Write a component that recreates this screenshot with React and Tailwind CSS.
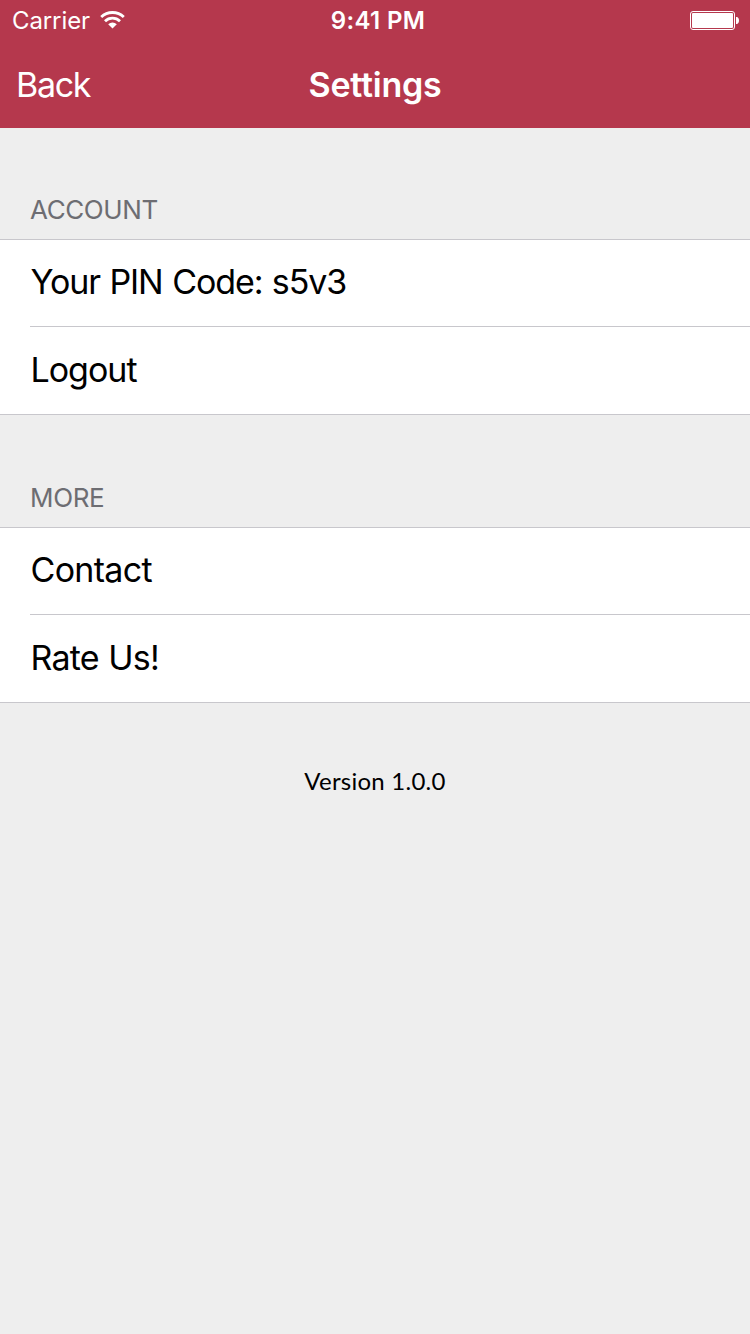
const rowText = "pb-[2px] pl-[0.5px] font-['Inter',sans-serif] text-[34px] leading-[40px] text-black whitespace-nowrap";

function WifiIcon() {
  return (
    <svg className="block h-[18px] w-[25px]" viewBox="0 0 25 18" fill="none">
      <path d="M1.2 6.1A16.2 16.2 0 0 1 23.8 6.1" stroke="white" strokeWidth="2.8" />
      <path d="M5 10.2A10.8 10.8 0 0 1 20 10.2" stroke="white" strokeWidth="2.8" />
      <path d="M8.2 13.3A6.3 6.3 0 0 1 16.8 13.3L12.5 17.6Z" fill="white" />
    </svg>
  );
}

function BatteryIcon() {
  return (
    <svg className="block h-[19px] w-[49px]" viewBox="0 0 49 19" fill="none">
      <rect x="0.5" y="0.5" width="44" height="18" rx="2.5" stroke="white" />
      <rect x="2" y="2" width="41" height="15" rx="1" fill="white" />
      <path d="M46 6H47C48.3 6.3 49 7.6 49 9.5S48.3 12.7 47 13H46Z" fill="white" />
    </svg>
  );
}

function Section({ title, rows, headingClass }) {
  return (
    <section>
      <h2 className={`${headingClass} pl-[30px] font-['Inter',sans-serif] text-[26px] leading-[32px] text-[#6d6d72]`}>{title}</h2>
      <ul className="border-y border-[#c8c7cc] bg-white">
        {rows.map((row, i) => (
          <li key={row.label} className="pl-[30px]">
            <div className={i > 0 ? "flex h-[88px] items-center border-t border-[#c8c7cc]" : "flex h-[86px] items-center"}>
              <span className={`${rowText} ${row.tracking}`}>{row.label}</span>
            </div>
          </li>
        ))}
      </ul>
    </section>
  );
}

const accountRows = [
  { label: "Your PIN Code: s5v3", tracking: "tracking-[-1.08px] [word-spacing:1px]" },
  { label: "Logout", tracking: "tracking-[-1px]" },
];

const moreRows = [
  { label: "Contact", tracking: "tracking-[-0.7px]" },
  { label: "Rate Us!", tracking: "tracking-[-0.75px] [word-spacing:0.5px]" },
];

export default function App() {
  return (
    <main className="h-[1334px] w-[750px] overflow-hidden bg-[#eeeeee]">
      <header className="h-[128px] bg-[#b5384d] font-['Inter',sans-serif] text-white">
        <div className="grid h-[40px] grid-cols-3 items-center text-[24px] leading-[38px]">
          <div className="flex items-center gap-[10px] pl-[12px]">
            <span className="pt-[2px] tracking-[-0.1px]">Carrier</span>
            <WifiIcon />
          </div>
          <span className="pt-[2px] pl-[6px] text-center font-semibold tracking-[0.35px]">9:41 PM</span>
          <div className="flex justify-end pt-px pr-[11px]">
            <BatteryIcon />
          </div>
        </div>
        <div className="grid h-[88px] grid-cols-3 items-center text-[34px]">
          <span className="pl-[16px] tracking-[-1.3px]">Back</span>
          <h1 className="text-center font-semibold tracking-[-0.25px]">Settings</h1>
        </div>
      </header>
      <Section title="ACCOUNT" rows={accountRows} headingClass="h-[111px] pt-[66px] tracking-[-0.4px]" />
      <Section title="MORE" rows={moreRows} headingClass="h-[112px] pt-[67px] tracking-[-0.35px]" />
      <footer className="pt-[62px] text-center font-['Lato',sans-serif] text-[24px] leading-[32px] tracking-[0.25px] text-black">Version 1.0.0</footer>
    </main>
  );
}
